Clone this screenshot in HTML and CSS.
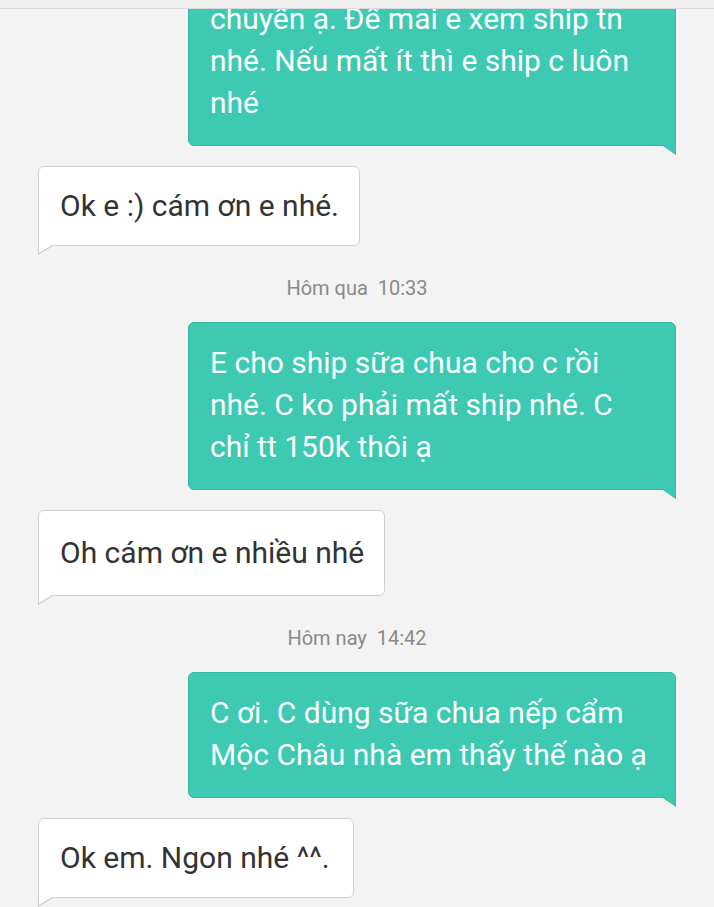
FILE: index.html
```html
<!DOCTYPE html>
<html lang="vi">
  <head>
    <meta charset="utf-8" />
    <title>Tin nhắn</title>
    <link rel="stylesheet" href="styles.css">
  </head>
  <body>
    <div class="topbar"></div>

    <main class="thread">
      <div class="msg msg-out first">
        chuyển ạ. Để mai e xem ship tn nhé. Nếu mất ít thì e ship c luôn nhé
      </div>
      <div class="msg msg-in">Ok e :) cám ơn e nhé.</div>

      <div class="stamp">Hôm qua&nbsp; 10:33</div>

      <div class="msg msg-out">
        E cho ship sữa chua cho c rồi nhé. C ko phải mất ship nhé. C chỉ tt 150k thôi ạ
      </div>
      <div class="msg msg-in roomy">Oh cám ơn e nhiều nhé</div>

      <div class="stamp">Hôm nay&nbsp; 14:42</div>

      <div class="msg msg-out">
        C ơi. C dùng sữa chua nếp cẩm Mộc Châu nhà em thấy thế nào ạ
      </div>
      <div class="msg msg-in">Ok em. Ngon nhé ^^.</div>
    </main>
  </body>
</html>
```

FILE: styles.css
```css
* {
  box-sizing: border-box;
}

body {
  margin: 0;
  height: 100vh;
  overflow: hidden;
  background: #f3f3f3;
  font-family: Roboto, "Noto Sans", sans-serif;
}

.topbar {
  height: 9px;
  background: #efefef;
  border-bottom: 1px solid #d9d9d9;
}

.thread {
  display: flex;
  flex-direction: column;
  align-items: flex-start;
  height: calc(100vh - 9px);
  overflow: hidden;
  padding: 0 38px;
}

.msg {
  position: relative;
  font-size: 30px;
  line-height: 42px;
  border: 1px solid;
  border-radius: 6px;
}

.msg + .msg {
  margin-top: 20px;
}

/* tail: ::before is the outline, ::after the fill on top */
.msg::before,
.msg::after {
  content: "";
  position: absolute;
  top: 100%;
}

.msg-out {
  align-self: flex-end;
  width: 488px;
  padding: 19px 25px 21px 21px;
  background: #3ec9b2;
  border-color: #36b8a1;
  color: #fbfffe;
  border-bottom-right-radius: 0;
}

.msg-out::before {
  right: -1px;
  width: 13px;
  height: 9px;
  margin-top: 1px;
  background: #36b8a1;
  clip-path: polygon(0 0, 100% 0, 100% 100%);
}

.msg-out::after {
  right: 0;
  width: 12px;
  height: 8px;
  background: #3ec9b2;
  clip-path: polygon(0 0, 100% 0, 100% 100%);
}

.msg-out.first {
  margin-top: -31px;
}

.msg-in {
  min-width: 316px;
  padding: 18px 20px 18px 21px;
  background: #fff;
  border-color: #d2d2d2;
  color: #333;
  border-bottom-left-radius: 0;
}

.msg-in::before {
  left: -1px;
  width: 15px;
  height: 9px;
  margin-top: 1px;
  background: #cdcdcd;
  clip-path: polygon(0 0, 100% 0, 0 100%);
}

.msg-in::after {
  left: 0;
  width: 13px;
  height: 8px;
  background: #fff;
  clip-path: polygon(0 0, 100% 0, 0 100%);
}

.msg-in.roomy {
  padding-top: 21px;
  padding-bottom: 21px;
}

.stamp {
  align-self: center;
  margin: 29px 0 21px;
  font-size: 20px;
  line-height: 26px;
  color: #8a8a8a;
}
```
